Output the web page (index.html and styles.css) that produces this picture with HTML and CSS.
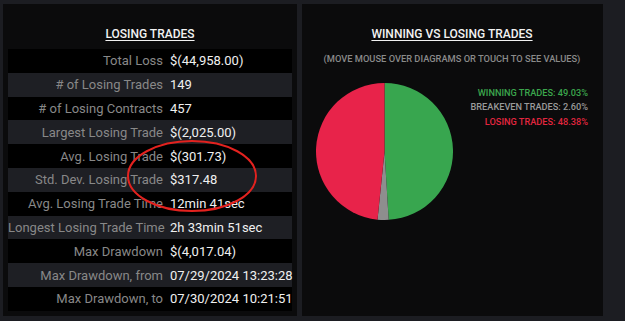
FILE: index.html
```html
<!DOCTYPE html>
<html>
<head>
<meta charset="utf-8">
<link rel="stylesheet" href="styles.css">
</head>
<body>
<div class="page">
  <section class="panel panel-left">
    <h2 class="title">LOSING TRADES</h2>
    <div class="stats">
      <div class="row"><span class="label">Total Loss</span><span class="value">$(44,958.00)</span></div>
      <div class="row alt"><span class="label"># of Losing Trades</span><span class="value">149</span></div>
      <div class="row"><span class="label"># of Losing Contracts</span><span class="value">457</span></div>
      <div class="row alt"><span class="label">Largest Losing Trade</span><span class="value">$(2,025.00)</span></div>
      <div class="row"><span class="label">Avg. Losing Trade</span><span class="value">$(301.73)</span></div>
      <div class="row alt"><span class="label">Std. Dev. Losing Trade</span><span class="value">$317.48</span></div>
      <div class="row"><span class="label">Avg. Losing Trade Time</span><span class="value">12min 41sec</span></div>
      <div class="row alt"><span class="label">Longest Losing Trade Time</span><span class="value">2h 33min 51sec</span></div>
      <div class="row"><span class="label">Max Drawdown</span><span class="value">$(4,017.04)</span></div>
      <div class="row alt"><span class="label">Max Drawdown, from</span><span class="value">07/29/2024 13:23:28</span></div>
      <div class="row"><span class="label">Max Drawdown, to</span><span class="value">07/30/2024 10:21:51</span></div>
    </div>
  </section>
  <section class="panel panel-right">
    <h2 class="title">WINNING VS LOSING TRADES</h2>
    <p class="hint">(MOVE MOUSE OVER DIAGRAMS OR TOUCH TO SEE VALUES)</p>
    <div class="chart">
      <svg class="pie" width="137" height="137" viewBox="0 0 137 137">
        <path fill="#38a64f" d="M68.5,68.5 L68.5,0 A68.5,68.5 0 0 1 72.672,136.873 Z"/>
        <path fill="#8e8e8e" d="M68.5,68.5 L72.672,136.873 A68.5,68.5 0 0 1 61.497,136.641 Z"/>
        <path fill="#e8234a" d="M68.5,68.5 L61.497,136.641 A68.5,68.5 0 0 1 68.5,0 Z"/>
      </svg>
      <ul class="legend">
        <li class="win">WINNING TRADES: 49.03%</li>
        <li class="even">BREAKEVEN TRADES: 2.60%</li>
        <li class="loss">LOSING TRADES: 48.38%</li>
      </ul>
    </div>
  </section>
</div>
<svg class="annotation" width="140" height="80" viewBox="0 0 140 80">
  <ellipse cx="70" cy="40" rx="64" ry="35" fill="none" stroke="#e3221f" stroke-width="2"/>
</svg>
</body>
</html>
```

FILE: styles.css
```css
* { box-sizing: border-box; }
html, body {
  margin: 0;
  padding: 0;
  background: #1c1d22;
  width: 625px;
  height: 321px;
  overflow: hidden;
  font-family: Roboto, "Liberation Sans", sans-serif;
}
.page {
  display: flex;
  gap: 5px;
  padding: 4px 0 0 3px;
}
.panel {
  background: #0b0b0c;
  height: 312px;
  padding-top: 23px;
}
.panel-left {
  width: 294px;
  padding-left: 5px;
  padding-right: 5px;
}
.panel-right {
  width: 301px;
  padding-left: 14px;
  padding-right: 15px;
}
.title {
  margin: 0;
  text-align: center;
  font-size: 12px;
  line-height: 14px;
  font-weight: 500;
  color: #f2f2f2;
  text-decoration: underline;
  text-underline-offset: 2px;
}
.panel-left .title { margin-bottom: 8px; }
.stats {
  display: flex;
  flex-direction: column;
}
.row {
  display: grid;
  grid-template-columns: 162px 1fr;
  height: 23.8px;
  align-items: center;
  background: #000;
  font-size: 13px;
}
.row.alt { background: #1e1f24; }
.label {
  text-align: right;
  padding-right: 7px;
  color: #888888;
  white-space: nowrap;
}
.value {
  color: #f0f0f0;
  white-space: nowrap;
}
.hint {
  margin: 12px 0 0;
  text-align: center;
  font-size: 9.3px;
  line-height: 12px;
  font-weight: 500;
  color: #8a8a8a;
}
.chart {
  display: flex;
  justify-content: space-between;
  align-items: flex-start;
  margin-top: 18px;
}
.pie { display: block; }
.legend {
  list-style: none;
  margin: 3px 0 0;
  padding: 0;
  text-align: right;
  font-size: 9.2px;
  line-height: 14.3px;
  font-weight: 500;
}
.legend .win { color: #3ba64c; }
.legend .even { color: #9a9a9a; }
.legend .loss { color: #e2263f; }
.annotation {
  position: absolute;
  left: 122px;
  top: 136px;
  overflow: visible;
}
```
